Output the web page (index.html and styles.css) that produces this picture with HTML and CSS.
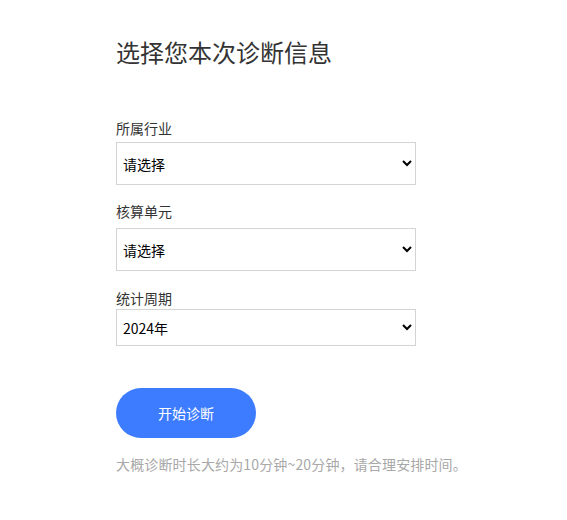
FILE: index.html
```html
<!DOCTYPE html>
<html lang="zh-CN">
<head>
<meta charset="utf-8">
<title>诊断信息</title>
<link rel="stylesheet" href="styles.css">
</head>
<body>
<main class="page">
  <h1 class="title">选择您本次诊断信息</h1>
  <form class="form">
    <div class="field field-industry">
      <label class="label" for="industry">所属行业</label>
      <select class="select select-tall" id="industry">
        <option>请选择</option>
      </select>
    </div>
    <div class="field field-unit">
      <label class="label" for="unit">核算单元</label>
      <select class="select select-tall" id="unit">
        <option>请选择</option>
      </select>
    </div>
    <div class="field field-period">
      <label class="label" for="period">统计周期</label>
      <select class="select select-short" id="period">
        <option>2024年</option>
      </select>
    </div>
    <button type="button" class="btn">开始诊断</button>
    <p class="note">大概诊断时长大约为10分钟~20分钟，请合理安排时间。</p>
  </form>
</main>
</body>
</html>
```

FILE: styles.css
```css
html, body {
  margin: 0;
  padding: 0;
  background: #fff;
}
body {
  font-family: "Microsoft YaHei", "Noto Sans CJK SC", "Noto Sans", sans-serif;
  color: #333;
}
.page {
  padding: 36px 0 0 116px;
}
.title {
  margin: 0;
  font-size: 24px;
  line-height: 32px;
  font-weight: 400;
  color: #333;
}
.form {
  display: flex;
  flex-direction: column;
  align-items: flex-start;
  margin-top: 50px;
}
.field {
  display: flex;
  flex-direction: column;
}
.label {
  font-size: 14px;
  line-height: 20px;
  color: #333;
}
.field-industry .label { margin-bottom: 4px; }
.field-unit { margin-top: 16px; }
.field-unit .label { margin-bottom: 7px; }
.field-period { margin-top: 17px; }
.field-period .label { margin-bottom: 1px; }
.select {
  width: 300px;
  box-sizing: border-box;
  border: 1px solid #d4d4d4;
  border-radius: 0;
  background: #fff;
  font-family: inherit;
  font-size: 14px;
  color: #000;
  padding: 0 2px;
  margin: 0;
}
.select-tall { height: 43px; }
.select-short { height: 37px; }
.btn {
  margin-top: 42px;
  width: 140px;
  height: 50px;
  border: none;
  border-radius: 25px;
  background: #3d7bff;
  color: #fff;
  font-family: inherit;
  font-size: 14px;
  cursor: pointer;
}
.note {
  margin: 16px 0 0;
  font-size: 14px;
  line-height: 20px;
  color: #a8a8a8;
  letter-spacing: 0.15px;
}
```
